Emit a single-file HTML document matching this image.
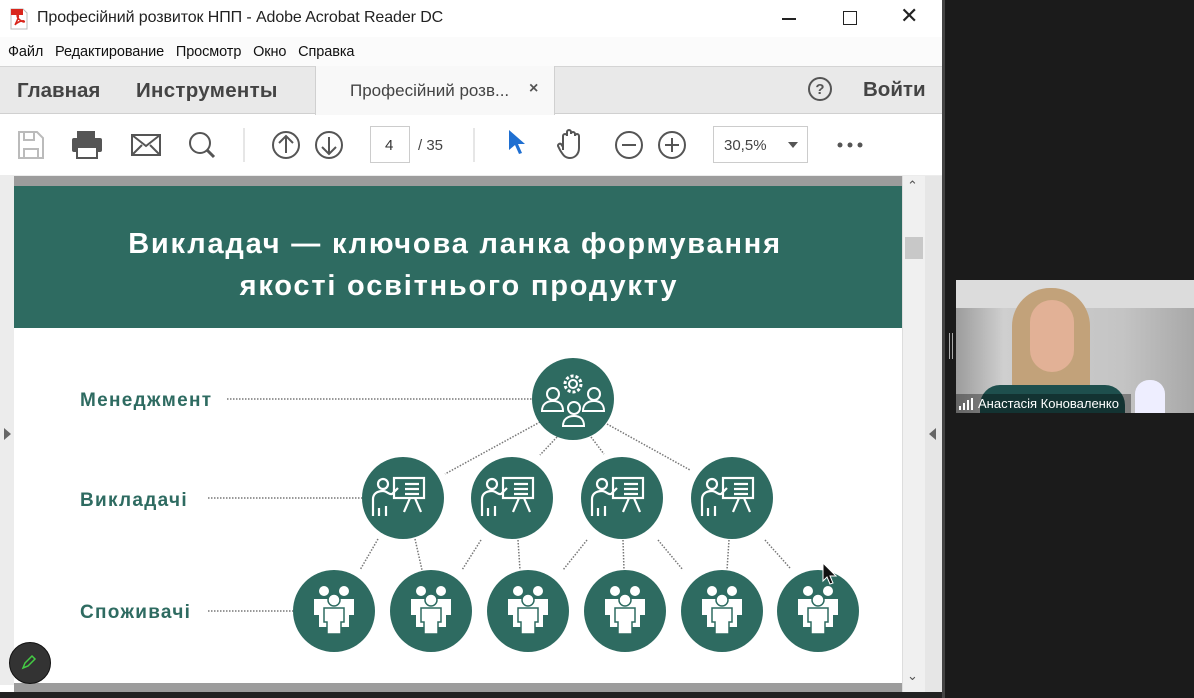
<!DOCTYPE html>
<html><head><meta charset="utf-8"><style>
body{margin:0;width:1194px;height:698px;overflow:hidden;background:#1b1b1b;font-family:"Liberation Sans",sans-serif;position:relative}
.a{position:absolute}
</style></head><body>
<div class="a" style="left:0;top:0;width:942px;height:698px;background:#fff"></div>
<!-- title -->
<svg class="a" style="left:8px;top:8px" width="22" height="22" viewBox="0 0 22 22"><path d="M3 1h12l4 4v16H3z" fill="#fff" stroke="#bbb"/><path d="M3 1h12v6H3z" fill="#d9261c"/><path d="M7 17c3-6 4-9 3-10s-2 2 2 5 5 2 4 1-7 1-9 4" fill="none" stroke="#d9261c" stroke-width="1.5"/></svg>
<div class="a" style="left:37px;top:9px;font-size:16px;color:#222;letter-spacing:-0.1px">Професійний розвиток НПП - Adobe Acrobat Reader DC</div>
<div class="a" style="left:782px;top:18px;width:14px;height:1.5px;background:#222"></div>
<div class="a" style="left:843px;top:11px;width:12px;height:12px;border:1.5px solid #222"></div>
<div class="a" style="left:900px;top:3px;font-size:22px;color:#222">✕</div>
<div class="a" style="left:0;top:37px;width:942px;height:29px;background:#fbfbfb"></div>
<div class="a" style="left:8px;top:44px;font-size:14.5px;color:#111;letter-spacing:-0.1px">Файл&nbsp;&nbsp;&nbsp;Редактирование&nbsp;&nbsp;&nbsp;Просмотр&nbsp;&nbsp;&nbsp;Окно&nbsp;&nbsp;&nbsp;Справка</div>
<!-- tabs -->
<div class="a" style="left:0;top:66px;width:942px;height:48px;background:#e9e9e9;border-top:1px solid #d4d4d4;border-bottom:1px solid #d0d0d0;box-sizing:border-box"></div>
<div class="a" style="left:315px;top:66px;width:238px;height:49px;background:#f8f8f8;border-left:1px solid #d0d0d0;border-right:1px solid #d0d0d0"></div>
<div class="a" style="left:17px;top:79px;font-size:20.5px;font-weight:bold;color:#444">Главная</div>
<div class="a" style="left:136px;top:79px;font-size:20.5px;font-weight:bold;color:#444;letter-spacing:0.3px">Инструменты</div>
<div class="a" style="left:350px;top:81px;font-size:17px;color:#444">Професійний розв...</div>
<div class="a" style="left:529px;top:80px;font-size:16px;font-weight:bold;color:#555">×</div>
<div class="a" style="left:808px;top:77px;width:24px;height:24px;border:2px solid #555;border-radius:50%;box-sizing:border-box;text-align:center;font-size:15px;line-height:21px;color:#555;font-weight:bold">?</div>
<div class="a" style="left:863px;top:78px;font-size:20.5px;font-weight:bold;color:#444">Войти</div>
<!-- toolbar -->
<svg class="a" style="left:0;top:114px" width="942" height="62">
<g fill="none" stroke="#bbb" stroke-width="2"><path d="M19 18h18l6 6v20H19z"/><path d="M24 18v8h10v-8M24 44v-9h14v9"/></g>
<g fill="#555"><rect x="77" y="17" width="18" height="8"/><rect x="72" y="24" width="30" height="14" rx="2"/><rect x="77" y="33" width="20" height="11" fill="#fff" stroke="#555" stroke-width="2"/></g>
<g fill="none" stroke="#555" stroke-width="2"><rect x="132" y="21" width="28" height="20"/><path d="M132 21l14 11 14-11M132 41l10-10M160 41l-10-10"/>
<circle cx="200" cy="29" r="10"/><path d="M207 36l7 7" stroke-width="3"/>
<circle cx="286" cy="31" r="13"/><path d="M286 39V23M279 29l7-7 7 7"/>
<circle cx="329" cy="31" r="13"/><path d="M329 23v16M322 33l7 7 7-7"/>
<circle cx="629" cy="31" r="13"/><path d="M622 31h14"/>
<circle cx="672" cy="31" r="13"/><path d="M665 31h14M672 24v14"/>
<path d="M563 36v-14a2 2 0 014 0v-4a2 2 0 014 0v2a2 2 0 014 0v2a2 2 0 014 0v12c0 6-4 10-9 10s-7-3-10-8l-2-4a2 2 0 013-2l2 3" /></g>
<line x1="244" y1="14" x2="244" y2="48" stroke="#ccc"/><line x1="474" y1="14" x2="474" y2="48" stroke="#ccc"/>
<rect x="370.5" y="12.5" width="39" height="36" fill="#fff" stroke="#ccc"/>
<text x="385" y="36" font-size="15" fill="#333" font-family="Liberation Sans">4</text>
<text x="418" y="36" font-size="15" fill="#444" font-family="Liberation Sans">/  35</text>
<path d="M509 16l16 14h-7l4 9-3 1-4-9-6 5z" fill="#1f6fd1"/>
<rect x="713.5" y="12.5" width="94" height="36" fill="#fff" stroke="#ccc"/>
<text x="724" y="36" font-size="15" fill="#444" font-family="Liberation Sans">30,5%</text>
<path d="M788 28h10l-5 6z" fill="#555"/>
<g fill="#555"><circle cx="840" cy="31" r="2.5"/><circle cx="850" cy="31" r="2.5"/><circle cx="860" cy="31" r="2.5"/></g>
</svg>
<!-- doc area -->
<div class="a" style="left:0;top:175px;width:942px;height:510px;background:#ececec"></div>
<div class="a" style="left:14px;top:176px;width:888px;height:10px;background:#9c9c9c"></div>
<div class="a" style="left:14px;top:683px;width:912px;height:9px;background:#9c9c9c"></div>
<div class="a" style="left:0;top:692px;width:942px;height:6px;background:#222"></div>
<div class="a" style="left:4px;top:428px;width:0;height:0;border-left:7px solid #666;border-top:6px solid transparent;border-bottom:6px solid transparent"></div>
<div class="a" style="left:902px;top:176px;width:23px;height:516px;background:#f0f0f0;border-left:1px solid #ddd;box-sizing:border-box"></div>
<div class="a" style="left:905px;top:237px;width:18px;height:22px;background:#c8c8c8"></div>
<div class="a" style="left:907px;top:178px;font-size:13px;color:#555">⌃</div>
<div class="a" style="left:907px;top:668px;font-size:13px;color:#555">⌄</div>
<div class="a" style="left:925px;top:176px;width:17px;height:516px;background:#e6e6e6"></div>
<div class="a" style="left:929px;top:428px;width:0;height:0;border-right:7px solid #666;border-top:6px solid transparent;border-bottom:6px solid transparent"></div>
<div class="a" style="left:942px;top:0;width:3px;height:698px;background:#444"></div>
<!-- page -->
<svg class="a" style="left:14px;top:186px" width="888" height="497" viewBox="14 186 888 497">
<defs>
<g id="t"><circle r="41" fill="#2e6b61"/><g fill="none" stroke="#fff" stroke-width="2.2"><circle cx="-20" cy="-14" r="5"/><path d="M-30 18v-17c0-5 4-8 10-8 4 0 6 4 9 3l6-6M-24 18v-8M-17 18v-10"/><rect x="-9" y="-20" width="30" height="20"/><path d="M2 -14h14M2 -9h14M2 -4h14M7 0l-6 14M12 0l6 14"/></g></g>
<g id="c"><circle r="41" fill="#2e6b61"/><g fill="#fff"><circle cx="-10" cy="-20" r="5"/><circle cx="10" cy="-20" r="5"/><path d="M-20 -12h40v16h-5v12h-30v-12h-5z"/></g><circle cy="-11" r="6" fill="#fff" stroke="#2e6b61" stroke-width="1.5"/><path d="M-10 -3h20v14h-3v12h-14v-12h-3z" fill="#fff" stroke="#2e6b61" stroke-width="1.5"/></g>
</defs>
<rect x="14" y="186" width="888" height="142" fill="#2e6b61"/>
<rect x="14" y="328" width="888" height="355" fill="#fff"/>
<g font-family="Liberation Sans" font-weight="bold" fill="#fff" font-size="29" letter-spacing="1.8" text-anchor="middle"><text x="455" y="253">Викладач — ключова ланка формування</text><text x="459" y="295">якості освітнього продукту</text></g>
<g font-family="Liberation Sans" font-weight="bold" fill="#2e6b61" font-size="19" letter-spacing="1.3"><text x="80" y="406">Менеджмент</text><text x="80" y="506">Викладачі</text><text x="80" y="618">Споживачі</text></g>
<g stroke="#777" stroke-width="1.5" stroke-dasharray="1.5 1.5" fill="none">
<path d="M227 399H532M208 498H362M208 611H293"/>
<path d="M540 422L445 474M557 437L540 455M591 437L604 454M607 424L690 470"/>
<path d="M378 539L360 570M415 539L422 570M481 540L462 570M518 540L520 570M587 540L563 570M623 540L624 570M658 540L683 570M729 540L727 570M765 540L790 568"/>
</g>
<circle cx="573" cy="399" r="41" fill="#2e6b61"/>
<g fill="none" stroke="#fff" stroke-width="2"><circle cx="573" cy="384" r="4"/><circle cx="573" cy="384" r="8" stroke-dasharray="3 2" stroke-width="3"/><circle cx="553" cy="394" r="6"/><path d="M542 411c0-7 5-10 11-10s10 3 10 10z"/><circle cx="594" cy="394" r="6"/><path d="M583 411c0-7 5-10 11-10s10 3 10 10z"/><circle cx="574" cy="408" r="6"/><path d="M563 426c0-7 5-10 11-10s10 3 10 10z"/></g>
<use href="#t" x="403" y="498"/><use href="#t" x="512" y="498"/><use href="#t" x="622" y="498"/><use href="#t" x="732" y="498"/>
<use href="#c" x="334" y="611"/><use href="#c" x="431" y="611"/><use href="#c" x="528" y="611"/><use href="#c" x="625" y="611"/><use href="#c" x="722" y="611"/><use href="#c" x="818" y="611"/>
<path d="M823 563v18l4-4 3 7 3-1-3-7h6z" fill="#111" stroke="#fff" stroke-width="1"/>
</svg>
<!-- pencil button -->
<div class="a" style="left:9px;top:642px;width:40px;height:40px;border-radius:50%;background:#333;border:1px solid #111"></div>
<svg class="a" style="left:20px;top:653px" width="18" height="18"><path d="M3 15l2-5 7-7 3 3-7 7z" fill="none" stroke="#4c4" stroke-width="1.5"/></svg>
<!-- video -->
<div class="a" style="left:956px;top:280px;width:238px;height:133px;background:linear-gradient(90deg,#9c9c9c,#cfcfcf 20%,#c4c4c4 70%,#a8a8a8)"></div>
<div class="a" style="left:956px;top:280px;width:238px;height:28px;background:#dcdcdc"></div>
<div class="a" style="left:1012px;top:288px;width:78px;height:125px;border-radius:38px 38px 0 0;background:#c2a27a"></div>
<div class="a" style="left:1030px;top:300px;width:44px;height:72px;border-radius:22px;background:#e2b196"></div>
<div class="a" style="left:980px;top:385px;width:145px;height:28px;background:#1e4f4d;border-radius:20px 20px 0 0"></div>
<div class="a" style="left:1135px;top:380px;width:30px;height:33px;background:#eef;border-radius:14px 14px 0 0"></div>
<div class="a" style="left:956px;top:394px;width:175px;height:19px;background:rgba(0,0,0,.35)"></div>
<svg class="a" style="left:959px;top:398px" width="16" height="12"><g fill="#fff"><rect x="0" y="8" width="2" height="4"/><rect x="4" y="5" width="2" height="7"/><rect x="8" y="2" width="2" height="10"/><rect x="12" y="0" width="2" height="12"/></g></svg>
<div class="a" style="left:978px;top:396px;font-size:13px;color:#fff">Анастасія Коноваленко</div>
<div class="a" style="left:949px;top:333px;width:1px;height:26px;background:#aaa;box-shadow:3px 0 #aaa"></div>
</body></html>
